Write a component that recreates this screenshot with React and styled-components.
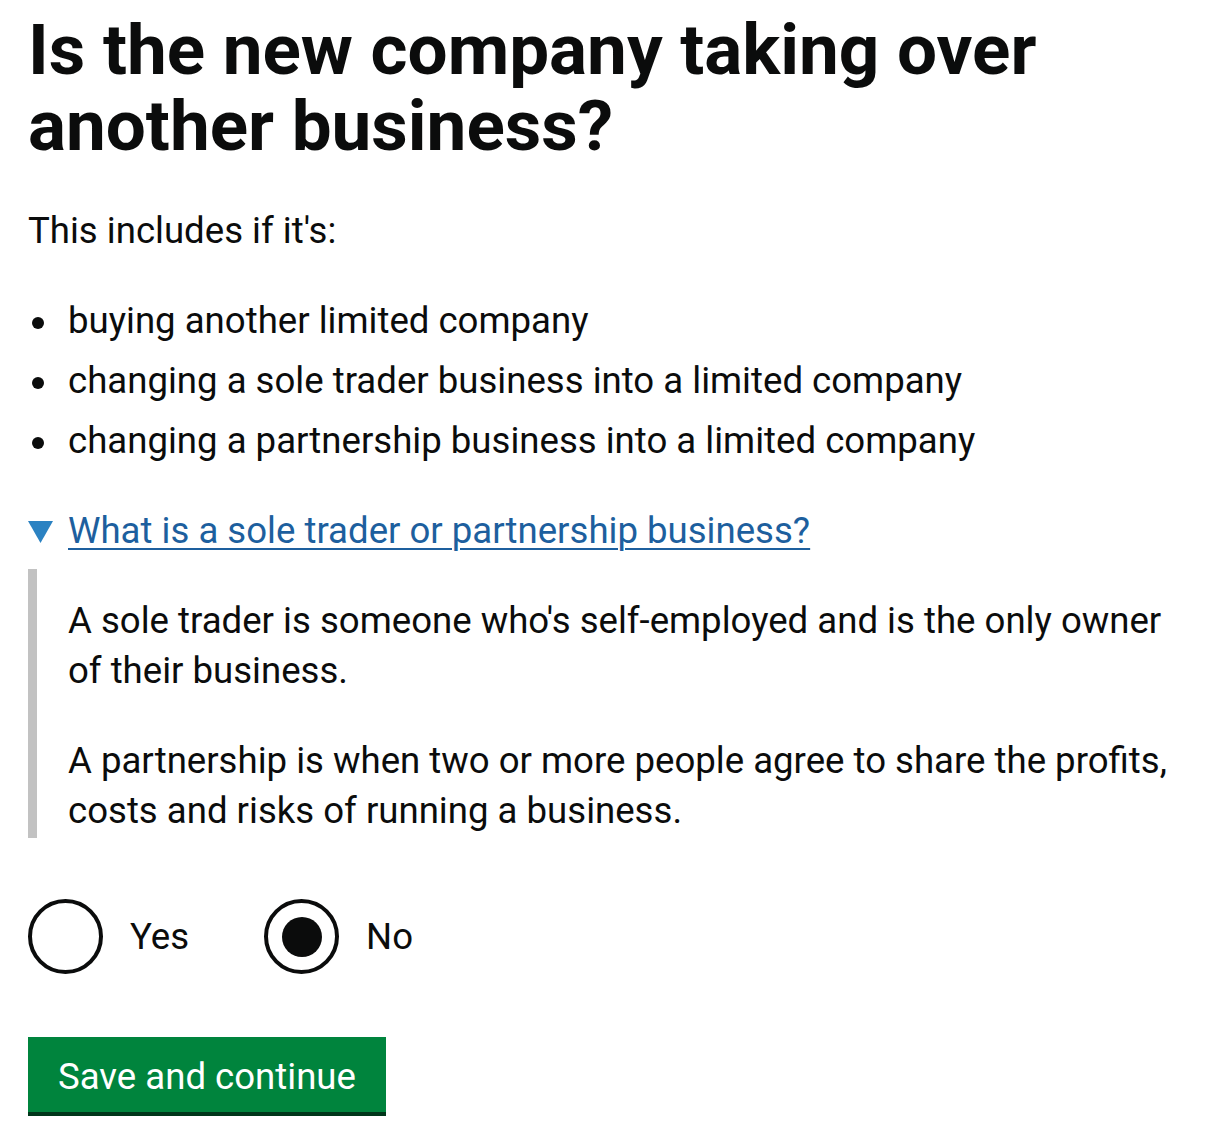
import React from "react";
import styled, { createGlobalStyle } from "styled-components";

const GlobalStyle = createGlobalStyle`
  html, body { margin: 0; padding: 0; background: #ffffff; }
  body {
    font-family: Roboto, "Noto Sans", Arial, sans-serif;
    color: #0b0c0c;
    -webkit-font-smoothing: antialiased;
  }
`;

const Main = styled.main`
  padding: 12px 28px 29px 28px;
  display: flex;
  flex-direction: column;
  align-items: flex-start;
`;

const Heading = styled.h1`
  margin: 0 0 42px 0;
  font-size: 71px;
  line-height: 76px;
  font-weight: 700;
  letter-spacing: 0;
`;

const Body = styled.p`
  margin: 0 0 ${(p) => (p.$last ? 0 : 40)}px 0;
  font-size: 36.6px;
  line-height: 50px;
`;

const List = styled.ul`
  margin: 0 0 40px 0;
  padding: 0 0 0 40px;
  list-style: none;
`;

const Item = styled.li`
  position: relative;
  font-size: 36.6px;
  line-height: 50px;
  margin-bottom: 10px;
  &:last-child { margin-bottom: 0; }
  &::before {
    content: "";
    position: absolute;
    left: -36px;
    top: 21px;
    width: 12px;
    height: 12px;
    border-radius: 50%;
    background: #0b0c0c;
  }
`;

const Details = styled.div`
  align-self: stretch;
  margin-bottom: 61px;
`;

const Summary = styled.div`
  display: flex;
  align-items: center;
  gap: 15px;
  margin-bottom: 13px;
`;

const Triangle = styled.svg`
  width: 25px;
  height: 22px;
  flex: none;
  margin-top: 2px;
`;

const SummaryLink = styled.a`
  font-size: 36.6px;
  line-height: 50px;
  color: #1d5f9e;
  text-decoration: underline;
  text-decoration-thickness: 2px;
  text-underline-offset: 5px;
  cursor: pointer;
`;

const Panel = styled.div`
  border-left: 9px solid #c2c2c2;
  padding: 27px 0 2px 31px;
`;

const Radios = styled.div`
  display: flex;
  align-items: center;
  margin-bottom: 63px;
`;

const RadioItem = styled.label`
  display: flex;
  align-items: center;
  gap: 27px;
  margin-right: ${(p) => (p.$last ? 0 : 75)}px;
  font-size: 36.6px;
  line-height: 50px;
  cursor: pointer;
`;

const Circle = styled.span`
  box-sizing: border-box;
  width: 75px;
  height: 75px;
  border: 4px solid #0b0c0c;
  border-radius: 50%;
  display: flex;
  align-items: center;
  justify-content: center;
  flex: none;
  &::after {
    content: "";
    width: 40px;
    height: 40px;
    border-radius: 50%;
    background: #0b0c0c;
    display: ${(p) => (p.$checked ? "block" : "none")};
  }
`;

const Button = styled.button`
  font-family: inherit;
  font-size: 36.6px;
  line-height: 50px;
  color: #ffffff;
  background: #00843d;
  border: 0;
  border-radius: 0;
  padding: 15px 30px 10px 30px;
  box-shadow: 0 4px 0 #00361a;
  cursor: pointer;
`;

export default function App() {
  return (
    <>
      <GlobalStyle />
      <Main>
        <Heading>
          Is the new company taking over
          <br />
          another business?
        </Heading>
        <Body>This includes if it's:</Body>
        <List>
          <Item>buying another limited company</Item>
          <Item>changing a sole trader business into a limited company</Item>
          <Item>changing a partnership business into a limited company</Item>
        </List>
        <Details>
          <Summary>
            <Triangle viewBox="0 0 25 22" aria-hidden="true">
              <polygon points="0,0 25,0 12.5,22" fill="#2b82c2" />
            </Triangle>
            <SummaryLink>What is a sole trader or partnership business?</SummaryLink>
          </Summary>
          <Panel>
            <Body>
              A sole trader is someone who's self-employed and is the only owner
              <br />
              of their business.
            </Body>
            <Body $last>
              A partnership is when two or more people agree to share the profits,
              <br />
              costs and risks of running a business.
            </Body>
          </Panel>
        </Details>
        <Radios role="radiogroup">
          <RadioItem>
            <Circle />
            Yes
          </RadioItem>
          <RadioItem $last>
            <Circle $checked />
            No
          </RadioItem>
        </Radios>
        <Button type="button">Save and continue</Button>
      </Main>
    </>
  );
}
